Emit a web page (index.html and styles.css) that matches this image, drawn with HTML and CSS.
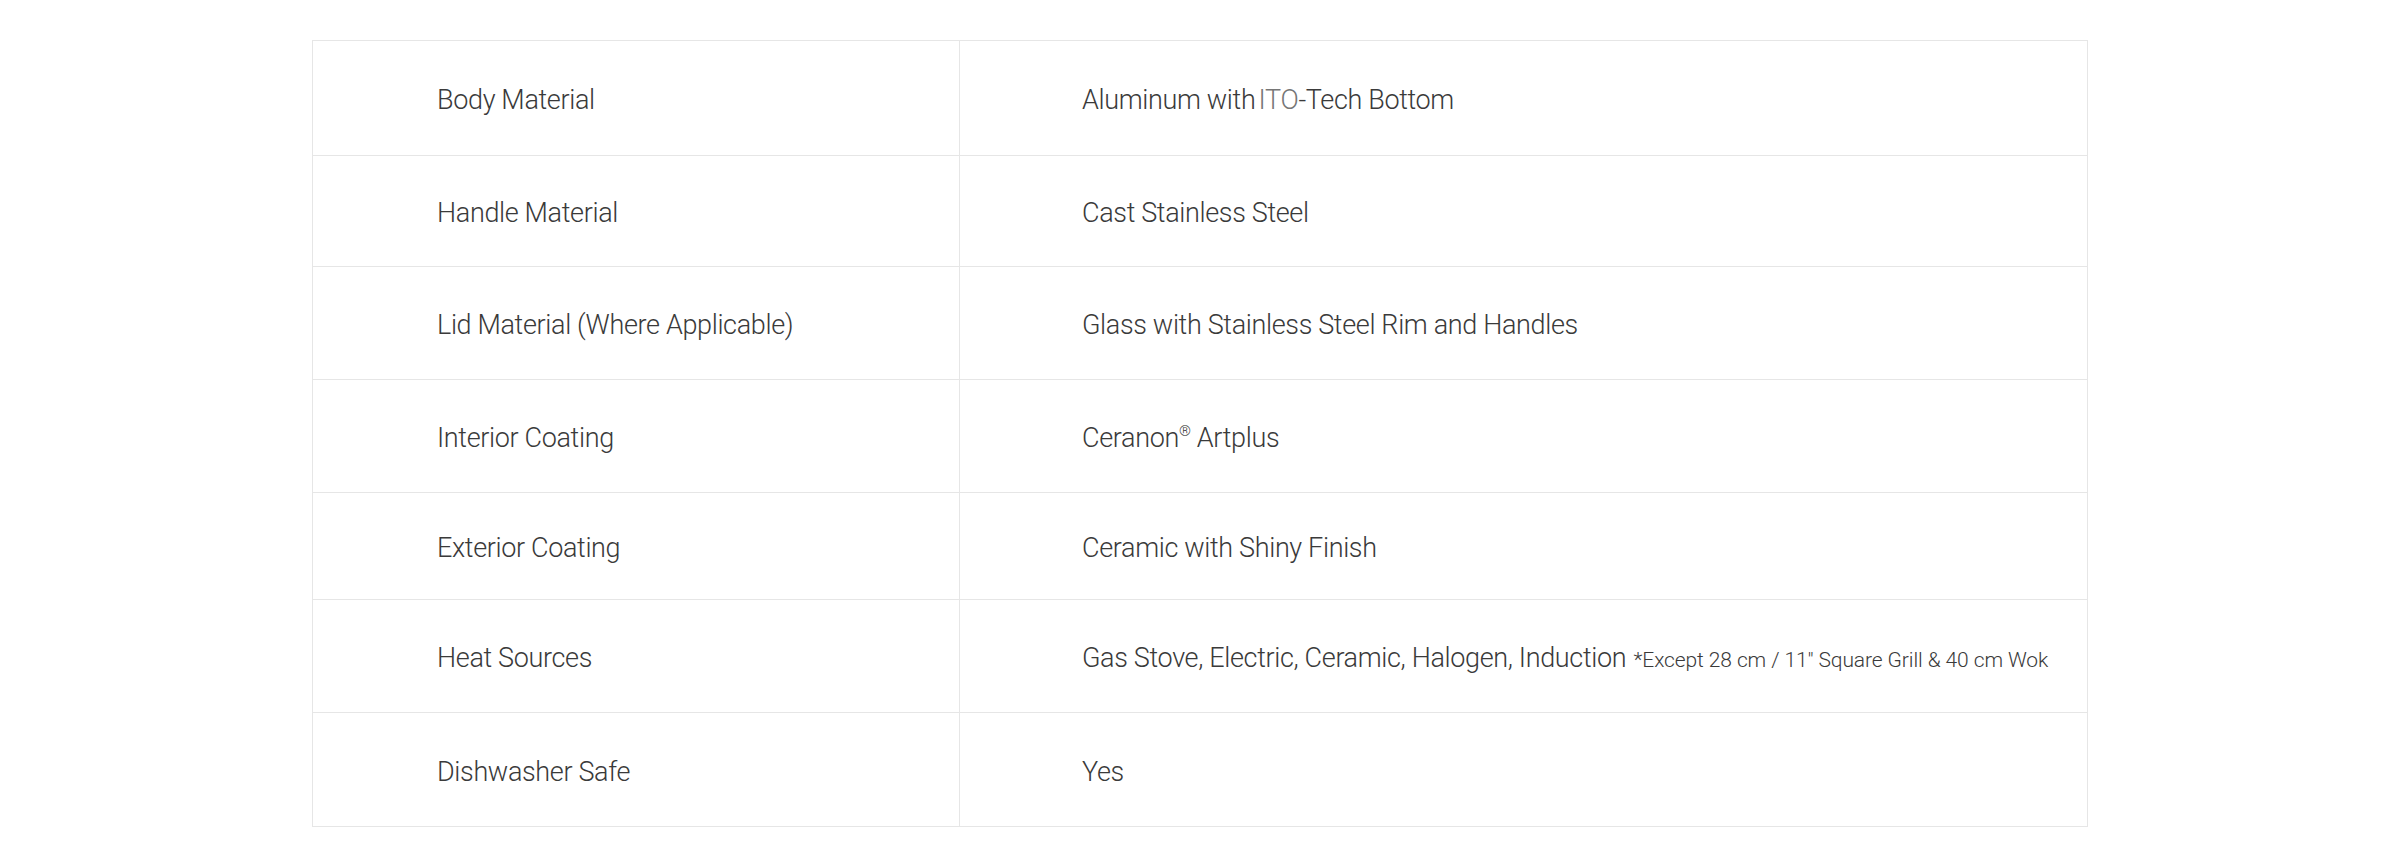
FILE: index.html
```html
<!DOCTYPE html>
<html lang="en">
<head>
<meta charset="utf-8">
<title>Specifications</title>
<link rel="stylesheet" href="styles.css">
</head>
<body>
<div class="spec-table">
  <div class="cell label"><span class="text">Body Material</span></div>
  <div class="cell value"><span class="text">Aluminum with <span class="ito">ITO</span>-Tech Bottom</span></div>

  <div class="cell label"><span class="text">Handle Material</span></div>
  <div class="cell value"><span class="text">Cast Stainless Steel</span></div>

  <div class="cell label"><span class="text">Lid Material (Where Applicable)</span></div>
  <div class="cell value"><span class="text">Glass with Stainless Steel Rim and Handles</span></div>

  <div class="cell label"><span class="text">Interior Coating</span></div>
  <div class="cell value"><span class="text">Ceranon<sup class="reg">®</sup> Artplus</span></div>

  <div class="cell label"><span class="text">Exterior Coating</span></div>
  <div class="cell value"><span class="text">Ceramic with Shiny Finish</span></div>

  <div class="cell label"><span class="text">Heat Sources</span></div>
  <div class="cell value"><span class="text">Gas Stove, Electric, Ceramic, Halogen, Induction <small class="note">*Except 28 cm / 11" Square Grill &amp; 40 cm Wok</small></span></div>

  <div class="cell label"><span class="text">Dishwasher Safe</span></div>
  <div class="cell value"><span class="text">Yes</span></div>
</div>
</body>
</html>
```
FILE: styles.css
```css
html, body {
  margin: 0;
  padding: 0;
  background: #ffffff;
}

body {
  padding-top: 40px;
  font-family: Roboto, "Liberation Sans", Arial, sans-serif;
  font-weight: 300;
  color: #3a3a3a;
}

.spec-table {
  display: grid;
  grid-template-columns: 647px 1fr;
  grid-template-rows: 115px 111px 113px 113px 107px 113px 114px;
  width: 1776px;
  margin: 0 auto;
  box-sizing: border-box;
  border-top: 1px solid #e6e6e6;
  border-left: 1px solid #e6e6e6;
  border-right: 1px solid #e6e6e6;
}

.cell {
  display: flex;
  align-items: center;
  box-sizing: border-box;
  border-bottom: 1px solid #e6e6e6;
  padding-left: 124px;
  padding-top: 5px;
  font-size: 27px;
  letter-spacing: -0.35px;
  line-height: 1.2;
  white-space: nowrap;
}

.label {
  border-right: 1px solid #e6e6e6;
}

.value {
  padding-left: 122px;
}

.ito {
  color: #767676;
  margin-left: -3px;
}

.reg {
  font-size: 15px;
  line-height: 0;
  vertical-align: 11px;
}

.note {
  font-size: 21px;
  letter-spacing: -0.1px;
  margin-left: 1px;
}
```
